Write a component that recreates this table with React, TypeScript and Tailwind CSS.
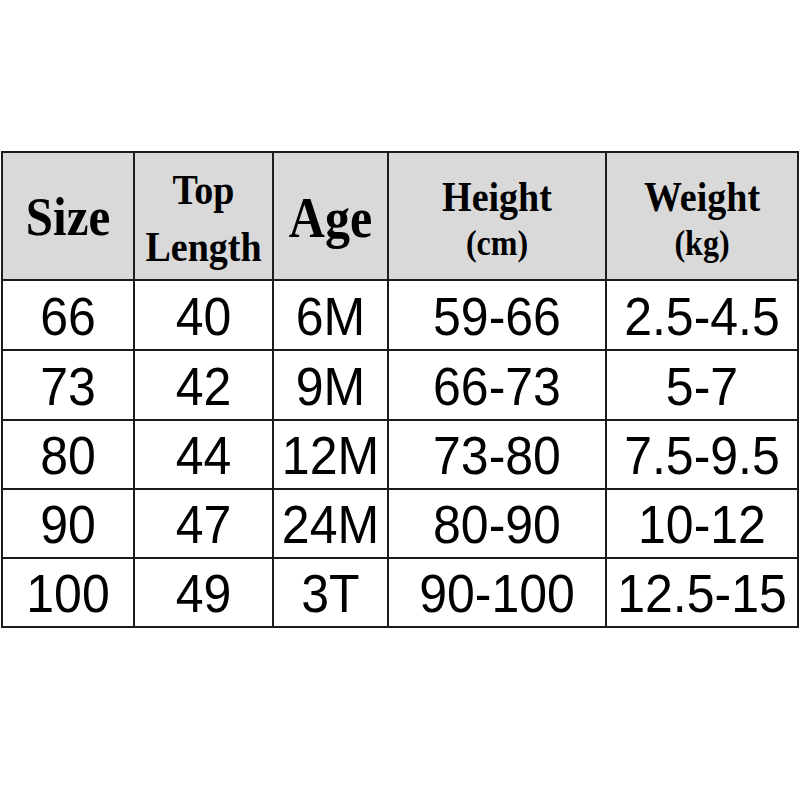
import React from "react";

const rows = [
  ["66", "40", "6M", "59-66", "2.5-4.5"],
  ["73", "42", "9M", "66-73", "5-7"],
  ["80", "44", "12M", "73-80", "7.5-9.5"],
  ["90", "47", "24M", "80-90", "10-12"],
  ["100", "49", "3T", "90-100", "12.5-15"],
];

const rowH = ["h-[70px]", "h-[70px]", "h-[69px]", "h-[69px]", "h-[69px]"];

export default function App() {
  const serif = { fontFamily: '"Liberation Serif", "Times New Roman", serif' };
  const sans = { fontFamily: '"Liberation Sans", Arial, sans-serif' };
  return (
    <div className="w-[800px] h-[800px] bg-white pt-[151px] pl-[1px]">
      <table className="border-collapse table-fixed w-[796px]">
        <colgroup>
          <col className="w-[132px]" />
          <col className="w-[139px]" />
          <col className="w-[115px]" />
          <col className="w-[218px]" />
          <col className="w-[192px]" />
        </colgroup>
        <thead>
          <tr className="h-[128px] bg-[#d9d9d9] text-black" style={serif}>
            <th className="border-2 border-[#1c1c1c] p-0 text-center align-middle">
              <span className="inline-block font-bold text-[49px] leading-none scale-y-[1.13]">Size</span>
            </th>
            <th className="border-2 border-[#1c1c1c] p-0 text-center align-middle">
              <div className="flex flex-col items-center font-bold text-[38px] leading-[52px] scale-y-[1.1] pt-[4px]">
                <span>Top</span>
                <span>Length</span>
              </div>
            </th>
            <th className="border-2 border-[#1c1c1c] p-0 text-center align-middle">
              <span className="inline-block font-bold text-[50px] leading-none scale-y-[1.13] pt-[4px]">Age</span>
            </th>
            <th className="border-2 border-[#1c1c1c] p-0 text-center align-middle">
              <div className="flex flex-col items-center font-bold scale-y-[1.1] pt-[4px]">
                <span className="text-[38px] leading-[44px]">Height</span>
                <span className="text-[32px] leading-[40px]">(cm)</span>
              </div>
            </th>
            <th className="border-2 border-[#1c1c1c] p-0 text-center align-middle">
              <div className="flex flex-col items-center font-bold scale-y-[1.1] pt-[4px]">
                <span className="text-[38px] leading-[44px]">Weight</span>
                <span className="text-[32px] leading-[40px]">(kg)</span>
              </div>
            </th>
          </tr>
        </thead>
        <tbody style={sans}>
          {rows.map((r, i) => (
            <tr key={i} className={`${rowH[i]} bg-white text-black`}>
              {r.map((c, j) => (
                <td key={j} className="border-2 border-[#1c1c1c] p-0 text-center align-middle whitespace-nowrap">
                  <span className="inline-block text-[50px] leading-none scale-y-[1.07] pt-[3px]">{c}</span>
                </td>
              ))}
            </tr>
          ))}
        </tbody>
      </table>
    </div>
  );
}
